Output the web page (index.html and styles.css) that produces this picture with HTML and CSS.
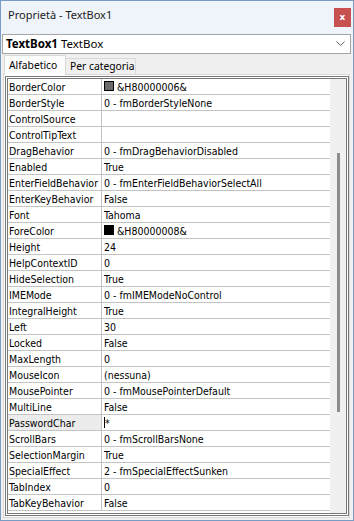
FILE: index.html
```html
<!DOCTYPE html>
<html lang="it">
<head>
<meta charset="utf-8">
<title>Proprietà - TextBox1</title>
<link rel="stylesheet" href="styles.css">
</head>
<body>
<div class="window">
  <div class="titlebar">
    <span class="title">Proprietà - TextBox1</span>
    <span class="close">x</span>
  </div>
  <div class="combo">
    <span class="combo-text"><b>TextBox1</b> TextBox</span>
    <svg class="chevron" width="9" height="6" viewBox="0 0 9 6"><polyline points="0.5,0.5 4.5,4.5 8.5,0.5" fill="none" stroke="#5f5f5f" stroke-width="1"/></svg>
  </div>
  <div class="tabs">
    <div class="tab active">Alfabetico</div>
    <div class="tab">Per categoria</div>
  </div>
  <div class="panel">
    <div class="grid">
      <div class="rows">
        <div class="row"><div class="name">BorderColor</div><div class="val"><span class="swatch gray"></span>&amp;H80000006&amp;</div></div>
        <div class="row"><div class="name">BorderStyle</div><div class="val">0 - fmBorderStyleNone</div></div>
        <div class="row"><div class="name">ControlSource</div><div class="val"></div></div>
        <div class="row"><div class="name">ControlTipText</div><div class="val"></div></div>
        <div class="row"><div class="name">DragBehavior</div><div class="val">0 - fmDragBehaviorDisabled</div></div>
        <div class="row"><div class="name">Enabled</div><div class="val">True</div></div>
        <div class="row"><div class="name">EnterFieldBehavior</div><div class="val">0 - fmEnterFieldBehaviorSelectAll</div></div>
        <div class="row"><div class="name">EnterKeyBehavior</div><div class="val">False</div></div>
        <div class="row"><div class="name">Font</div><div class="val">Tahoma</div></div>
        <div class="row"><div class="name">ForeColor</div><div class="val"><span class="swatch black"></span>&amp;H80000008&amp;</div></div>
        <div class="row"><div class="name">Height</div><div class="val">24</div></div>
        <div class="row"><div class="name">HelpContextID</div><div class="val">0</div></div>
        <div class="row"><div class="name">HideSelection</div><div class="val">True</div></div>
        <div class="row"><div class="name">IMEMode</div><div class="val">0 - fmIMEModeNoControl</div></div>
        <div class="row"><div class="name">IntegralHeight</div><div class="val">True</div></div>
        <div class="row"><div class="name">Left</div><div class="val">30</div></div>
        <div class="row"><div class="name">Locked</div><div class="val">False</div></div>
        <div class="row"><div class="name">MaxLength</div><div class="val">0</div></div>
        <div class="row"><div class="name">MouseIcon</div><div class="val">(nessuna)</div></div>
        <div class="row"><div class="name">MousePointer</div><div class="val">0 - fmMousePointerDefault</div></div>
        <div class="row"><div class="name">MultiLine</div><div class="val">False</div></div>
        <div class="row selected"><div class="name">PasswordChar</div><div class="val"><span class="caret"></span>*</div></div>
        <div class="row"><div class="name">ScrollBars</div><div class="val">0 - fmScrollBarsNone</div></div>
        <div class="row"><div class="name">SelectionMargin</div><div class="val">True</div></div>
        <div class="row"><div class="name">SpecialEffect</div><div class="val">2 - fmSpecialEffectSunken</div></div>
        <div class="row"><div class="name">TabIndex</div><div class="val">0</div></div>
        <div class="row"><div class="name">TabKeyBehavior</div><div class="val">False</div></div>
      </div>
      <div class="vscroll"><div class="thumb"></div></div>
    </div>
  </div>
</div>
</body>
</html>
```
FILE: styles.css
```css
html, body {
  margin: 0;
  padding: 0;
  background: #f0f0f0;
}

.window {
  box-sizing: border-box;
  width: 354px;
  height: 521px;
  border: 1px solid #7a9bc4;
  background: #f0f0f0;
  display: flex;
  flex-direction: column;
  overflow: hidden;
}

.titlebar {
  height: 33px;
  flex: none;
  background: #eff4fa;
  display: flex;
  align-items: flex-start;
}

.title {
  margin: 6px 0 0 7px;
  font-family: "Noto Sans", "Open Sans", sans-serif;
  font-size: 11px;
  line-height: 15px;
  color: #1a1a1a;
}

.close {
  margin: 7px 2px 0 auto;
  width: 17px;
  height: 19px;
  background: #c75050;
  color: #ffffff;
  font-family: "DejaVu Sans", sans-serif;
  font-weight: bold;
  font-size: 9px;
  line-height: 18px;
  text-align: center;
}

.combo {
  flex: none;
  box-sizing: border-box;
  height: 20px;
  margin: 0 2px 0 1px;
  border: 1px solid #a5a5a5;
  background: #ffffff;
  display: flex;
  align-items: center;
  padding: 0 5px 0 3px;
}

.combo-text {
  font-family: "Noto Sans", "Open Sans", sans-serif;
  font-size: 11.5px;
  line-height: 18px;
  color: #000;
}

.chevron {
  margin-left: auto;
  display: block;
}

.tabs {
  flex: none;
  height: 20px;
  display: flex;
  align-items: flex-end;
  padding-left: 3px;
}

.tab {
  box-sizing: border-box;
  font-family: "Noto Sans", "Open Sans", sans-serif;
  font-size: 10.3px;
  color: #000;
  border: 1px solid #d9d9d9;
  border-bottom: none;
  background: #f0f0f0;
  height: 16px;
  width: 71px;
  line-height: 14px;
  padding: 0 0 0 4px;
  margin-left: -1px;
  white-space: nowrap;
}

.tab.active {
  position: relative;
  z-index: 1;
  height: 20px;
  width: 62px;
  margin-left: 0;
  margin-bottom: -1px;
  background: #fcfcfc;
  padding: 2px 0 0 4px;
  line-height: 15px;
}

.panel {
  flex: none;
  box-sizing: border-box;
  height: 444px;
  margin: 0 3px 2px 2px;
  border: 1px solid #d9d9d9;
  background: #fcfcfc;
  padding: 1px 0 1px 1px;
}

.grid {
  box-sizing: border-box;
  height: 440px;
  border: 3px double #787878;
  background: #ffffff;
  display: flex;
}

.rows {
  width: 322px;
  flex: none;
}

.row {
  box-sizing: border-box;
  height: 16px;
  border-bottom: 1px solid #c3c3c3;
  display: grid;
  grid-template-columns: 94px 1fr;
  font-family: "DejaVu Sans Condensed", "DejaVu Sans", sans-serif;
  font-size: 10.5px;
  color: #000;
}

.name {
  border-right: 1px solid #c3c3c3;
  padding: 2px 0 0 1px;
  line-height: 12px;
  white-space: nowrap;
  overflow: hidden;
}

.val {
  padding: 2px 0 0 2px;
  line-height: 12px;
  white-space: nowrap;
  overflow: hidden;
  display: flex;
  align-items: flex-start;
}

.row.selected .name {
  background: #ececec;
}

.swatch {
  box-sizing: border-box;
  width: 10px;
  height: 10px;
  margin: 0 3px 0 0;
  border: 1px solid #000;
  flex: none;
}

.swatch.gray {
  background: #6b6b6b;
}

.swatch.black {
  background: #000;
}

.caret {
  width: 1px;
  height: 11px;
  background: #000;
  flex: none;
}

.vscroll {
  flex: 1;
  background: #f0f0f0;
}

.thumb {
  margin: 74px 0 0 7px;
  width: 3px;
  height: 259px;
  background: #8c8c8c;
}
```
